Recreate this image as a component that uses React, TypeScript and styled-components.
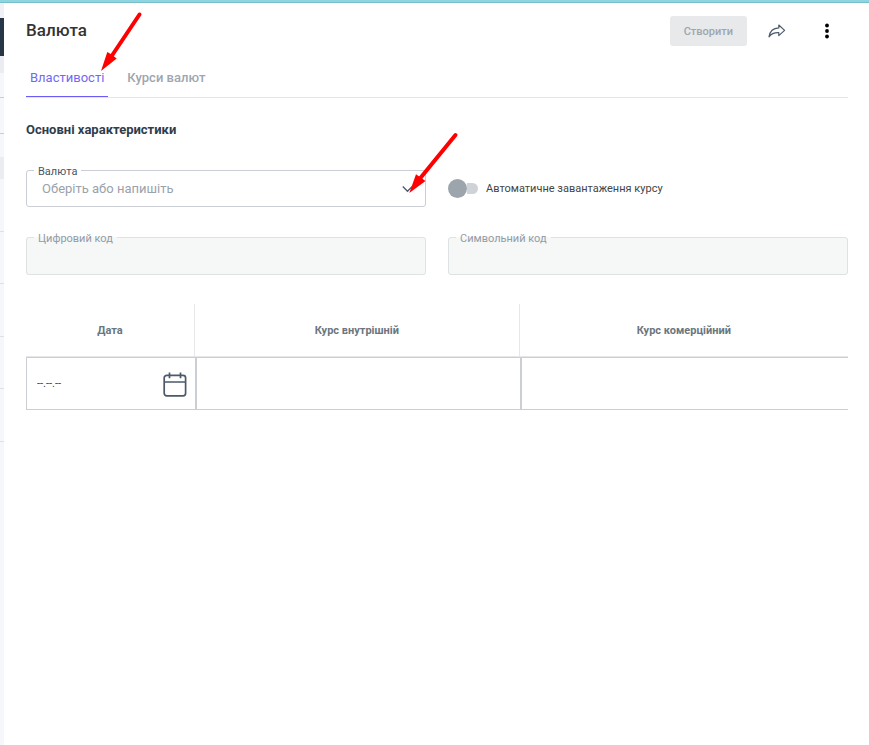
import React, { useState } from "react";
import styled, { createGlobalStyle } from "styled-components";

const GlobalStyle = createGlobalStyle`
  *, *::before, *::after { box-sizing: border-box; }
  html { height: 100%; }
  body { margin: 0; min-height: 100%; background: #fff; }
  body, button, input { font-family: Roboto, "Liberation Sans", sans-serif; }
`;

const Page = styled.div`
  position: relative;
  display: flex;
  flex-direction: column;
  min-height: 100vh;
`;

const TopBar = styled.div`
  height: 3px;
  flex: none;
  background: #8fd4e1;
  border-bottom: 1px solid #78bfc9;
`;

const Body = styled.div`
  display: flex;
  flex: 1;
`;

const Backdrop = styled.div`
  flex: none;
  width: 4px;
  background: #f6f7fb;
`;

const Band = styled.div<{ $height: number; $color: string; $line?: string }>`
  height: ${(p) => p.$height}px;
  background: ${(p) => p.$color};
  border-bottom: ${(p) => (p.$line ? `1px solid ${p.$line}` : "0")};
`;

const Panel = styled.main`
  flex: 1;
  min-width: 0;
  padding: 13px 21px 24px 22px;
`;

const Header = styled.header`
  display: flex;
  align-items: center;
  height: 30px;
`;

const Title = styled.h1`
  flex: 1;
  margin: 0;
  padding-bottom: 2px;
  font-size: 17px;
  line-height: 20px;
  font-weight: 500;
  color: #333;
`;

const CreateButton = styled.button`
  height: 30px;
  padding: 0 14px;
  border: 0;
  border-radius: 3px;
  background: #e7e9eb;
  color: #9ea6ad;
  font-size: 11px;
  font-weight: 500;
`;

const IconButton = styled.button`
  display: flex;
  align-items: center;
  justify-content: center;
  width: 30px;
  height: 30px;
  padding: 0;
  border: 0;
  background: none;
  color: ${(p) => p.color};
`;

const Actions = styled.div`
  display: flex;
  gap: 20px;
  margin: 0 6px 0 15px;
`;

const Tabs = styled.div`
  display: flex;
  gap: 15px;
  margin-top: 12px;
  border-bottom: 1px solid #e4e6e9;
`;

const Tab = styled.button<{ $active: boolean }>`
  height: 39px;
  padding: 0 4px;
  border: 0;
  border-bottom: 1px solid ${(p) => (p.$active ? "#6a5cf5" : "transparent")};
  background: none;
  color: ${(p) => (p.$active ? "#7468f2" : "#9fa6ad")};
  font-size: 13px;
  font-weight: ${(p) => (p.$active ? 400 : 500)};
`;

const SectionTitle = styled.h2`
  margin: 24px 0 26px;
  font-size: 13px;
  line-height: 16px;
  font-weight: 700;
  color: #2f3d4c;
`;

const Fields = styled.div`
  display: grid;
  grid-template-columns: 1fr 1fr;
  gap: 24px 22px;
`;

const FieldFrame = styled.fieldset<{ $disabled?: boolean }>`
  min-width: 0;
  margin: 0;
  padding: 0;
  border: 1px solid ${(p) => (p.$disabled ? "#dfe2e3" : "#cbced4")};
  border-radius: 3px;
  background: ${(p) => (p.$disabled ? "#f6f8f8" : "#fff")};
  color: ${(p) => (p.$disabled ? "#949ba5" : "#4b5563")};
`;

const Legend = styled.legend`
  margin-left: 7px;
  padding: 2px 4px 0;
  font-size: 11px;
  line-height: 11px;
`;

const FieldRow = styled.div<{ $height: number }>`
  display: flex;
  height: ${(p) => p.$height}px;
  padding: 0 12px 6px 15px;
  align-items: center;
`;

const TextInput = styled.input`
  flex: 1;
  min-width: 0;
  height: 20px;
  padding: 0;
  border: 0;
  outline: 0;
  background: transparent;
  font-size: 13px;
  color: #3c4650;
  &::placeholder { color: #9aa2ab; opacity: 1; }
`;

const SwitchLabel = styled.label`
  display: flex;
  align-items: center;
  gap: 8px;
  padding-top: 5px;
  font-size: 11px;
  color: #444;
`;

const Switch = styled.input`
  appearance: none;
  display: flex;
  align-items: center;
  width: 30px;
  height: 19px;
  margin: 0;
  &::before {
    content: "";
    width: 19px;
    height: 19px;
    border-radius: 50%;
    background: #9ca4ac;
  }
  &::after {
    content: "";
    flex: 1;
    height: 11px;
    border-radius: 0 6px 6px 0;
    background: #cfd2d8;
  }
  &:checked { flex-direction: row-reverse; }
  &:checked::before { background: #6a5cf5; }
  &:checked::after { border-radius: 6px 0 0 6px; }
`;

const RateTable = styled.table`
  width: 100%;
  margin-top: 29px;
  table-layout: fixed;
  border-collapse: separate;
  border-spacing: 0;
`;

const HeadCell = styled.th`
  height: 53px;
  padding: 0;
  border-right: 1px solid #e6e7e9;
  border-bottom: 1px solid #e6e7e9;
  font-size: 11px;
  font-weight: 700;
  color: #6b7680;
  &:first-child { width: 169px; }
  &:nth-child(2) { width: 39.5%; }
  &:last-child { border-right: 0; }
`;

const Cell = styled.td`
  height: 53px;
  padding: 0 8px 0 10px;
  border: solid #cbced3;
  border-width: 1px 0 1px 2px;
  &:first-child { border-left-width: 1px; }
`;

const CellContent = styled.div`
  display: flex;
  align-items: center;
`;

const CellInput = styled(TextInput)`
  width: 100%;
  font-size: 11px;
  &::placeholder { color: #39434f; }
`;

const Pointers = styled.svg`
  position: absolute;
  left: 0;
  top: 0;
  pointer-events: none;
`;

const bands = [
  { height: 15, color: "#f0f1f6" },
  { height: 38, color: "#263646" },
  { height: 17, color: "#ebebf2" },
  { height: 25, color: "#f6f7fb", line: "#c9cbd5" },
  { height: 36, color: "#f6f7fb", line: "#c9cbd5" },
  { height: 23, color: "#f6f7fb" },
  { height: 22, color: "#ebebf2" },
  { height: 53, color: "#f6f7fb", line: "#dfe0ea" },
  { height: 52, color: "#f6f7fb", line: "#dfe0ea" },
  { height: 53, color: "#f6f7fb", line: "#dfe0ea" },
  { height: 52, color: "#f6f7fb", line: "#dfe0ea" },
  { height: 53, color: "#f6f7fb", line: "#dfe0ea" },
];

function ShareIcon() {
  return (
    <svg width="18" height="14" viewBox="0 0 18 14" fill="none" stroke="currentColor" strokeWidth="1.2" strokeLinejoin="round">
      <path d="M10.8 1 L16.6 6.4 L10.8 11.6 V8.7 C6.4 8.5 3.4 9.5 1 12.8 C1.8 7.4 5.2 4.2 10.8 3.9 Z" />
    </svg>
  );
}

function DotsIcon() {
  return (
    <svg width="6" height="16" viewBox="0 0 6 16" fill="currentColor">
      <circle cx="3" cy="2.5" r="1.9" />
      <circle cx="3" cy="8" r="1.9" />
      <circle cx="3" cy="13.5" r="1.9" />
    </svg>
  );
}

function ChevronIcon() {
  return (
    <svg width="11" height="8" viewBox="0 0 11 8" fill="none" stroke="#4b5a6b" strokeWidth="1.3">
      <path d="M0.8 1.5 L5.5 6.3 L10.2 1.5" />
    </svg>
  );
}

function CalendarIcon() {
  return (
    <svg width="24" height="26" viewBox="0 0 24 26" fill="none" stroke="#4b5a6b" strokeWidth="1.7">
      <rect x="1.2" y="4.3" width="21.4" height="20.5" rx="2.5" />
      <path d="M1.2 11H22.6M6.5 1.5V7.2M17.5 1.5V7.2" />
    </svg>
  );
}

function DisabledField({ id, label }: { id: string; label: string }) {
  return (
    <FieldFrame $disabled>
      <Legend>
        <label htmlFor={id}>{label}</label>
      </Legend>
      <FieldRow $height={30}>
        <TextInput id={id} disabled />
      </FieldRow>
    </FieldFrame>
  );
}

export default function App() {
  const [tab, setTab] = useState(0);
  return (
    <>
      <GlobalStyle />
      <Page>
        <TopBar />
        <Body>
          <Backdrop>
            {bands.map((b, i) => (
              <Band key={i} $height={b.height} $color={b.color} $line={b.line} />
            ))}
          </Backdrop>
          <Panel>
            <Header>
              <Title>Валюта</Title>
              <CreateButton disabled>Створити</CreateButton>
              <Actions>
                <IconButton aria-label="Поділитися" color="#4b5a6b">
                  <ShareIcon />
                </IconButton>
                <IconButton aria-label="Меню" color="#000">
                  <DotsIcon />
                </IconButton>
              </Actions>
            </Header>
            <Tabs role="tablist">
              {["Властивості", "Курси валют"].map((name, i) => (
                <Tab key={name} role="tab" aria-selected={tab === i} $active={tab === i} onClick={() => setTab(i)}>
                  {name}
                </Tab>
              ))}
            </Tabs>
            <SectionTitle>Основні характеристики</SectionTitle>
            <Fields>
              <FieldFrame>
                <Legend>
                  <label htmlFor="currency">Валюта</label>
                </Legend>
                <FieldRow $height={29}>
                  <TextInput id="currency" role="combobox" aria-expanded={false} placeholder="Оберіть або напишіть" />
                  <ChevronIcon />
                </FieldRow>
              </FieldFrame>
              <SwitchLabel>
                <Switch type="checkbox" role="switch" />
                Автоматичне завантаження курсу
              </SwitchLabel>
              <DisabledField id="digits" label="Цифровий код" />
              <DisabledField id="symbol" label="Символьний код" />
            </Fields>
            <RateTable>
              <thead>
                <tr>
                  <HeadCell>Дата</HeadCell>
                  <HeadCell>Курс внутрішній</HeadCell>
                  <HeadCell>Курс комерційний</HeadCell>
                </tr>
              </thead>
              <tbody>
                <tr>
                  <Cell>
                    <CellContent>
                      <CellInput aria-label="Дата" placeholder="--.--.--" />
                      <CalendarIcon />
                    </CellContent>
                  </Cell>
                  <Cell>
                    <CellInput aria-label="Курс внутрішній" />
                  </Cell>
                  <Cell>
                    <CellInput aria-label="Курс комерційний" />
                  </Cell>
                </tr>
              </tbody>
            </RateTable>
          </Panel>
        </Body>
        <Pointers width="470" height="200" viewBox="0 0 470 200" fill="#fe0000" stroke="#fe0000" strokeLinecap="round" aria-hidden="true">
          <path d="M139.5 14.5 L111 57" strokeWidth="4" />
          <path d="M101 71 L107.3 52 L111.5 54.5 L116.7 58.5 Z" stroke="none" />
          <path d="M455.5 135 L420 178.5" strokeWidth="4" />
          <path d="M409.3 193 L416 174.3 L420 177 L425.5 181 Z" stroke="none" />
        </Pointers>
      </Page>
    </>
  );
}
